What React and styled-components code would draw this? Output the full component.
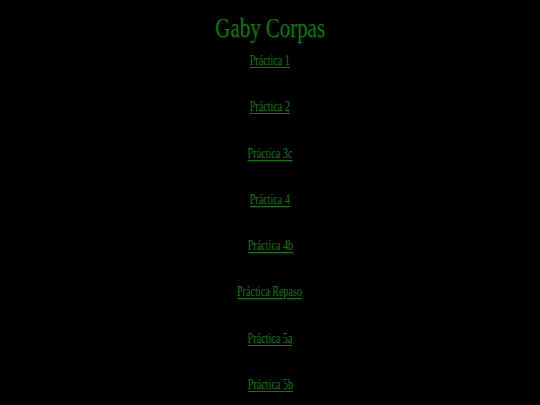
import React from 'react';
import styled, { createGlobalStyle } from 'styled-components';

const links = [
  'Práctica 1',
  'Práctica 2',
  'Práctica 3c',
  'Práctica 4',
  'Práctica 4b',
  'Práctica Repaso',
  'Práctica 5a',
  'Práctica 5b',
];

function App() {
  return (
    <Page>
      <GlobalStyle />
      <Title>Gaby Corpas</Title>
      <LinkList>
        {links.map((label) => (
          <Item key={label}>
            <PracticeLink href="#">{label}</PracticeLink>
          </Item>
        ))}
      </LinkList>
    </Page>
  );
}

const GlobalStyle = createGlobalStyle`
  html, body {
    margin: 0;
    padding: 0;
    background-color: #000;
  }
  body {
    font-family: "Liberation Serif", "Times New Roman", serif;
  }
`;

const Page = styled.div`
  width: 540px;
  height: 405px;
  overflow: hidden;

  display: flex;
  flex-direction: column;
  align-items: center;
  padding-top: 12px;
  box-sizing: border-box;

  background-color: #000;
  color: #008000;
`;

const Title = styled.h1`
  margin: 0;

  font-size: 27.5px;
  line-height: 31px;
  font-weight: normal;
  color: #008000;
  transform: scaleX(0.76);
`;

const LinkList = styled.ul`
  list-style: none;
  margin: 9px 0 0;
  padding: 0;

  display: flex;
  flex-direction: column;
  align-items: center;
  gap: 30.3px;
`;

const Item = styled.li`
  line-height: 16px;
  height: 16px;
`;

const PracticeLink = styled.a`
  display: inline-block;

  font-size: 14.5px;
  color: #008000;
  text-decoration: underline;
  text-decoration-thickness: 1px;
  text-underline-offset: 2px;
  transform: scaleX(0.7);
`;

export default App;
